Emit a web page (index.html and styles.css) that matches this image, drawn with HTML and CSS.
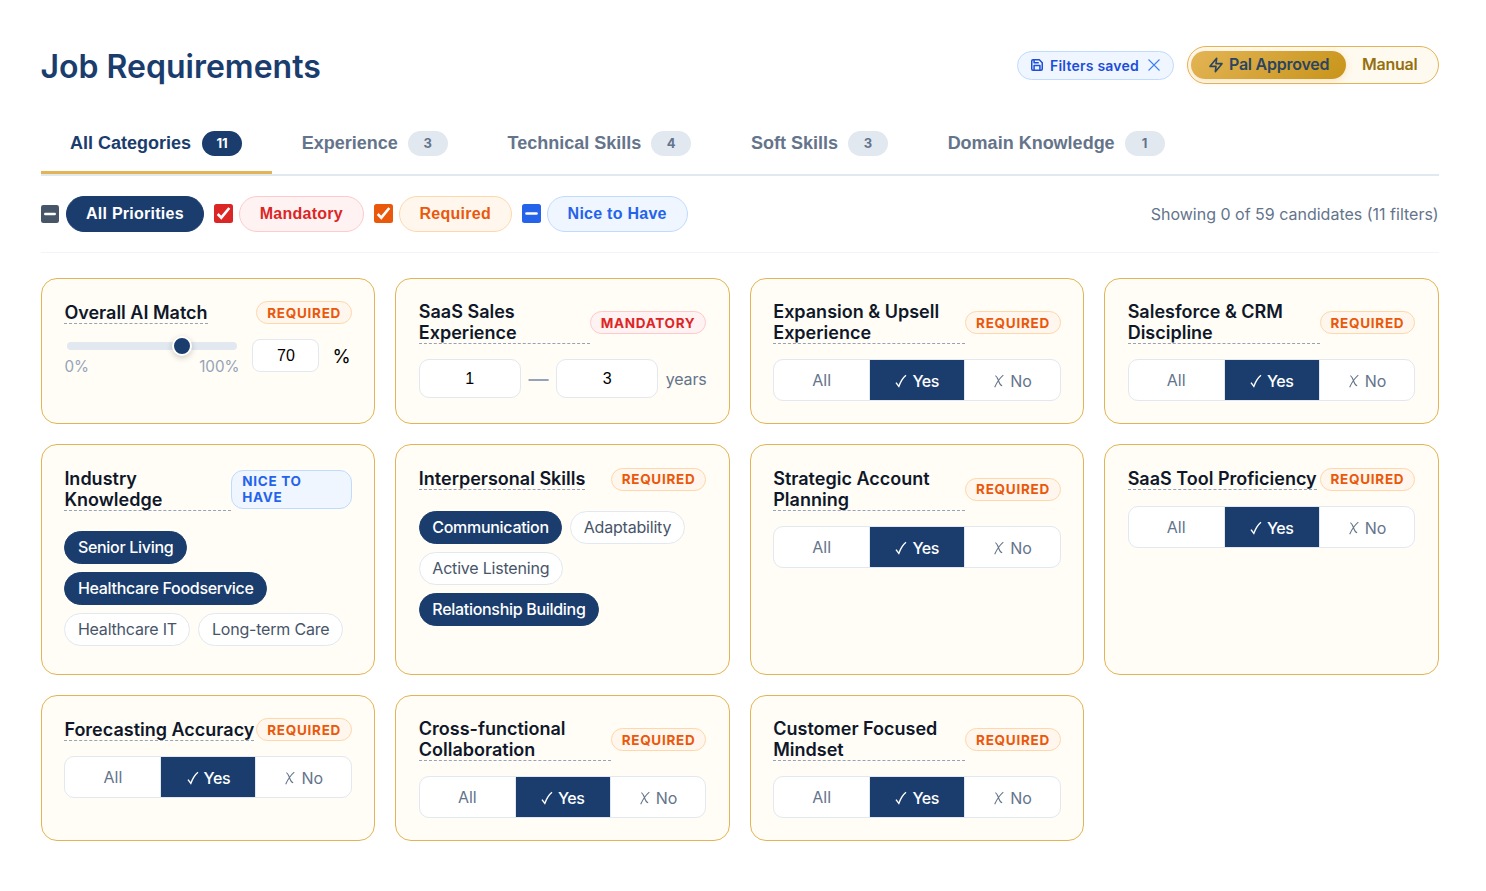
FILE: index.html
```html
<!DOCTYPE html>
<html lang="en">
<head>
<meta charset="utf-8">
<title>Job Requirements</title>
<link rel="stylesheet" href="styles.css">
</head>
<body>
<svg class="defs" width="0" height="0">
  <symbol id="check" viewBox="0 0 12 14"><path d="M1 8.6 3.8 12.4C5.4 8 7.6 4 11 1.2" fill="none" stroke="currentColor" stroke-width="1.4"/></symbol>
  <symbol id="cross" viewBox="0 0 12 14"><path d="M2.2 1.8C4 2 5 5.5 6 8s1.7 3.600 3.200 3.800M10.300 1.200C7 4 3.800 8.500 1.700 13.300" fill="none" stroke="currentColor" stroke-width="1.100"/></symbol>
</svg>
<main class="page">
  <header class="header">
    <h1 class="heading">Job Requirements</h1>
    <div class="actions">
      <div class="saved">
        <svg class="saved-icon" viewBox="0 0 24 24" fill="none" stroke="currentColor" stroke-width="2.6" stroke-linejoin="round"><path d="M5 3h11l5 5v11a2 2 0 0 1-2 2H5a2 2 0 0 1-2-2V5a2 2 0 0 1 2-2zM7 3v5h8M7 21v-8h10v8"/></svg>
        <span>Filters saved</span>
        <svg class="saved-close" viewBox="0 0 12 12" fill="none" stroke="currentColor" stroke-width="1.1"><path d="M.5.5l11 11M11.500.5l-11 11"/></svg>
      </div>
      <div class="mode">
        <span class="mode-item mode-active"><svg class="bolt" viewBox="0 0 24 24" fill="none" stroke="currentColor" stroke-width="2.400" stroke-linejoin="round"><path d="M13 2 3 14h9l-1 8 10-12h-9z"/></svg>Pal Approved</span>
        <span class="mode-item">Manual</span>
      </div>
    </div>
  </header>
  <nav class="tabs">
    <span class="tab tab-active">All Categories<b class="count">11</b></span>
    <span class="tab">Experience<b class="count">3</b></span>
    <span class="tab">Technical Skills<b class="count">4</b></span>
    <span class="tab">Soft Skills<b class="count">3</b></span>
    <span class="tab">Domain Knowledge<b class="count">1</b></span>
  </nav>
  <section class="priorities">
    <svg class="box box-all" viewBox="0 0 19 19"><rect width="19" height="19" rx="2.500" fill="currentColor"/><path d="M4.500 9.500h10" stroke="#fff" stroke-width="2.600" stroke-linecap="round"/></svg>
    <span class="pill pill-all">All Priorities</span>
    <svg class="box red" viewBox="0 0 19 19"><rect width="19" height="19" rx="2.500" fill="currentColor"/><path d="M3.700 10l3.600 3.700 8-9.700" fill="none" stroke="#fff" stroke-width="2.600"/></svg>
    <span class="pill mandatory">Mandatory</span>
    <svg class="box orange" viewBox="0 0 19 19"><rect width="19" height="19" rx="2.500" fill="currentColor"/><path d="M3.700 10l3.600 3.700 8-9.700" fill="none" stroke="#fff" stroke-width="2.600"/></svg>
    <span class="pill required">Required</span>
    <svg class="box blue" viewBox="0 0 19 19"><rect width="19" height="19" rx="2.500" fill="currentColor"/><path d="M4.500 9.500h10" stroke="#fff" stroke-width="2.600" stroke-linecap="round"/></svg>
    <span class="pill nice">Nice to Have</span>
    <span class="showing">Showing 0 of 59 candidates (11 filters)</span>
  </section>
  <section class="grid">
    <article class="card">
      <div class="card-head"><h2 class="title">Overall AI Match</h2><span class="badge required">Required</span></div>
      <div class="match">
        <div class="slider"><div class="track"><i class="thumb"></i></div><div class="scale"><span>0%</span><span>100%</span></div></div>
        <span class="field field-small">70</span><span class="percent">%</span>
      </div>
    </article>
    <article class="card">
      <div class="card-head"><h2 class="title">SaaS Sales Experience</h2><span class="badge mandatory">Mandatory</span></div>
      <div class="range"><span class="field">1</span><span class="dash">—</span><span class="field">3</span><span class="years">years</span></div>
    </article>
    <article class="card">
      <div class="card-head"><h2 class="title">Expansion &amp; Upsell Experience</h2><span class="badge required">Required</span></div>
      <div class="segment"><span class="option option-all">All</span><span class="option chosen"><svg class="mark"><use href="#check"/></svg>Yes</span><span class="option"><svg class="mark"><use href="#cross"/></svg>No</span></div>
    </article>
    <article class="card">
      <div class="card-head"><h2 class="title">Salesforce &amp; CRM Discipline</h2><span class="badge required">Required</span></div>
      <div class="segment"><span class="option option-all">All</span><span class="option chosen"><svg class="mark"><use href="#check"/></svg>Yes</span><span class="option"><svg class="mark"><use href="#cross"/></svg>No</span></div>
    </article>
    <article class="card">
      <div class="card-head"><h2 class="title">Industry Knowledge</h2><span class="badge nice">Nice to Have</span></div>
      <div class="chips"><span class="chip chip-on">Senior Living</span><span class="chip chip-on">Healthcare Foodservice</span><span class="chip">Healthcare IT</span><span class="chip">Long-term Care</span></div>
    </article>
    <article class="card">
      <div class="card-head"><h2 class="title">Interpersonal Skills</h2><span class="badge required">Required</span></div>
      <div class="chips"><span class="chip chip-on">Communication</span><span class="chip">Adaptability</span><span class="chip">Active Listening</span><span class="chip chip-on">Relationship Building</span></div>
    </article>
    <article class="card">
      <div class="card-head"><h2 class="title">Strategic Account Planning</h2><span class="badge required">Required</span></div>
      <div class="segment"><span class="option option-all">All</span><span class="option chosen"><svg class="mark"><use href="#check"/></svg>Yes</span><span class="option"><svg class="mark"><use href="#cross"/></svg>No</span></div>
    </article>
    <article class="card">
      <div class="card-head"><h2 class="title">SaaS Tool Proficiency</h2><span class="badge required">Required</span></div>
      <div class="segment"><span class="option option-all">All</span><span class="option chosen"><svg class="mark"><use href="#check"/></svg>Yes</span><span class="option"><svg class="mark"><use href="#cross"/></svg>No</span></div>
    </article>
    <article class="card">
      <div class="card-head"><h2 class="title">Forecasting Accuracy</h2><span class="badge required">Required</span></div>
      <div class="segment"><span class="option option-all">All</span><span class="option chosen"><svg class="mark"><use href="#check"/></svg>Yes</span><span class="option"><svg class="mark"><use href="#cross"/></svg>No</span></div>
    </article>
    <article class="card">
      <div class="card-head"><h2 class="title">Cross-functional Collaboration</h2><span class="badge required">Required</span></div>
      <div class="segment"><span class="option option-all">All</span><span class="option chosen"><svg class="mark"><use href="#check"/></svg>Yes</span><span class="option"><svg class="mark"><use href="#cross"/></svg>No</span></div>
    </article>
    <article class="card">
      <div class="card-head"><h2 class="title">Customer Focused Mindset</h2><span class="badge required">Required</span></div>
      <div class="segment"><span class="option option-all">All</span><span class="option chosen"><svg class="mark"><use href="#check"/></svg>Yes</span><span class="option"><svg class="mark"><use href="#cross"/></svg>No</span></div>
    </article>
  </section>
</main>
</body>
</html>
```
FILE: styles.css
```css
* { box-sizing: border-box; }
body { margin: 0; background: #fff; font-family: Inter, sans-serif; color: #0f172a; }
.defs { position: absolute; }
.page { padding: 46px 47.300px 48px 41px; }
.header { display: flex; justify-content: space-between; align-items: center; height: 38px; }
.heading { margin: 0 0 0 -.5px; padding-top: 3px; font-size: 32px; font-weight: 600; line-height: 38px; color: #1a3d6e; }
.actions { display: flex; align-items: center; gap: 13px; margin-right: -.3px; }
.saved { display: flex; align-items: center; width: 157px; height: 29px; padding: 0 13px 0 12px; border: 1px solid #bfdbfe; border-radius: 15px; background: #eff6ff; color: #1d4ed8; font-size: 14px; font-weight: 600; letter-spacing: .22px; white-space: nowrap; }
.saved-icon { width: 14px; height: 14px; margin-right: 6px; }
.saved-close { width: 12px; height: 12px; margin-left: auto; color: #3b82f6; }
.mode { display: flex; align-items: center; width: 252px; height: 38px; padding: 3px; border: 1px solid #e3b455; border-radius: 19px; background: #fffaf0; }
.mode-item { display: flex; align-items: center; height: 28px; padding: 0 16px 2px; font-size: 16px; font-weight: 600; letter-spacing: -.25px; color: #96700f; white-space: nowrap; }
.mode-active { width: 155px; border-radius: 14px; background: linear-gradient(135deg, #e3b455, #c8941a); color: #2b4560; box-shadow: 0 2px 8px rgba(227, 180, 85, .3); }
.bolt { width: 16px; height: 16px; margin: 2px 5px 0 1px; }
.tabs { display: flex; height: 62px; margin-top: 30px; border-bottom: 2px solid #e2e8f0; }
.tab { display: flex; align-items: center; height: 60px; padding: 2px 30px 0 29.700px; font: 700 18px "Liberation Sans", sans-serif; color: #64748b; white-space: nowrap; border-bottom: 3px solid transparent; }
.tab-active { padding-left: 29px; color: #1a3d6e; border-bottom-color: #e3b455; }
.count { width: 40px; height: 25px; margin-left: 10px; border-radius: 13px; background: #e2e8f0; font: 700 13px/25px Inter, sans-serif; text-align: center; }
.tab-active .count { margin-left: 11px; background: #1a3d6e; color: #fff; }
.priorities { display: flex; align-items: center; height: 77px; border-bottom: 1px solid #f1f5f9; }
.box { width: 19px; height: 19px; margin: -1px 6px 0 0; flex: none; }
.box-all { width: 18px; height: 18px; margin-right: 7px; color: #475569; }
.red { color: #dc2626; }
.orange { color: #ea580c; }
.blue { color: #2563eb; }
.pill { height: 36px; margin-right: 10px; padding: 0 19.800px; border: 1px solid; border-radius: 18px; font: 700 16px/34px "Liberation Sans", sans-serif; letter-spacing: .26px; white-space: nowrap; }
.badge { padding: 2.500px 10px; border: 1px solid; border-radius: 12px; font-size: 13.500px; font-weight: 700; line-height: 16px; letter-spacing: .72px; text-transform: uppercase; }
.pill-all { padding: 0 19px; background: #1a3d6e; border-color: #1a3d6e; color: #fff; }
.mandatory { background: #fef2f2; border-color: #fecaca; color: #dc2626; }
.required { background: #fff7ed; border-color: #fed7aa; color: #ea580c; }
.nice { background: #eff6ff; border-color: #bfdbfe; color: #2563eb; }
.showing { margin-left: auto; font-size: 16px; color: #64748b; }
.grid { display: grid; grid-template-columns: repeat(4, 1fr); gap: 20px; margin-top: 25px; }
.card { padding: 22.400px 22.400px 22px; border: 1px solid #e3b455; border-radius: 16px; background: #fffdf5; }
.card-head { display: flex; justify-content: space-between; align-items: center; margin-bottom: 15px; }
.title { margin: 0; font-size: 18px; font-weight: 600; line-height: 21px; border-bottom: 1px dashed #94a3b8; }
.match { display: flex; align-items: flex-start; }
.slider { width: 174px; padding-top: 3px; }
.track { position: relative; height: 8px; margin: 0 1px 0 3px; border-radius: 4px; background: #e2e8f0; }
.thumb { position: absolute; left: 105px; top: -6px; width: 20px; height: 20px; border: 2px solid #fff; border-radius: 50%; background: #1a3d6e; box-shadow: 0 2px 6px rgba(0, 0, 0, .2); }
.scale { display: flex; justify-content: space-between; margin: 7px -1px 0 0; font-size: 15.200px; line-height: 20px; color: #94a3b8; }
.field { width: 102px; height: 39px; border: 1px solid #e2e8f0; border-radius: 10px; background: #fff; color: #000; font: 16px/37px "Liberation Sans", sans-serif; text-align: center; flex: none; }
.field-small { width: 67px; height: 33px; margin-left: 14px; border-radius: 8px; line-height: 31px; }
.percent { margin-left: 13px; font-size: 18.500px; line-height: 35px; color: #000; }
.range { display: flex; align-items: center; justify-content: space-between; height: 39px; }
.dash, .years { font-size: 16px; color: #64748b; }
.years { letter-spacing: -.2px; }
.dash { font-size: 20px; font-weight: 500; color: #94a3b8; }
.segment { display: grid; grid-template-columns: 96px 95px 1fr; height: 42px; border: 1px solid #e2e8f0; border-radius: 10px; background: #fff; overflow: hidden; }
.option { display: flex; align-items: center; justify-content: center; padding-top: 2px; font-size: 16px; color: #64748b; border-right: 1px solid #e2e8f0; }
.option:last-child { border-right: 0; }
.option-all { padding-top: 0; }
.chosen { background: #1a3d6e; color: #fff; font-weight: 500; letter-spacing: -.4px; }
.mark { width: 12px; height: 14px; margin-right: 5px; }
.chips { display: flex; flex-wrap: wrap; gap: 8px; padding: 5px 0 6px; }
.chip { height: 33px; padding: 0 12.500px; border: 1px solid #e2e8f0; border-radius: 17px; background: #fff; font-size: 16px; line-height: 31px; letter-spacing: -.2px; color: #475569; white-space: nowrap; }
.chip-on { background: #1a3d6e; border-color: #1a3d6e; color: #fff; font-weight: 500; letter-spacing: -.3px; }
```
